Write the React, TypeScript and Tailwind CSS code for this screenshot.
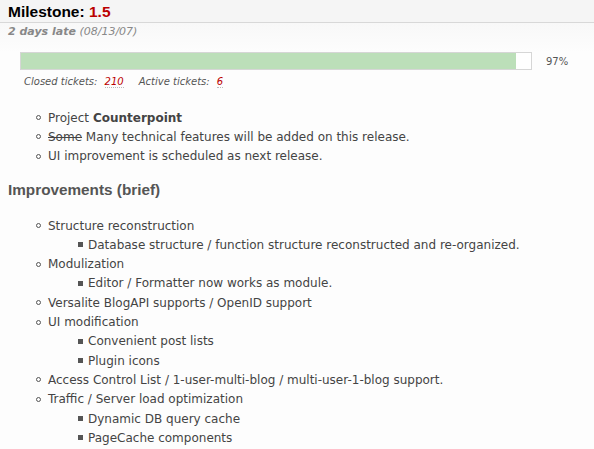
import React from "react";

interface Item {
  text: React.ReactNode;
  children?: string[];
}

const intro: Item[] = [
  {
    text: (
      <>
        Project <b>Counterpoint</b>
      </>
    ),
  },
  {
    text: (
      <>
        <del>Some</del> Many technical features will be added on this release.
      </>
    ),
  },
  { text: "UI improvement is scheduled as next release." },
];

const improvements: Item[] = [
  {
    text: "Structure reconstruction",
    children: [
      "Database structure / function structure reconstructed and re-organized.",
    ],
  },
  { text: "Modulization", children: ["Editor / Formatter now works as module."] },
  { text: "Versalite BlogAPI supports / OpenID support" },
  { text: "UI modification", children: ["Convenient post lists", "Plugin icons"] },
  { text: "Access Control List / 1-user-multi-blog / multi-user-1-blog support." },
  {
    text: "Traffic / Server load optimization",
    children: ["Dynamic DB query cache", "PageCache components"],
  },
];

const Bullet = ({ square = false }: { square?: boolean }) =>
  square ? (
    <span className="w-[5px] h-[5px] bg-[#555] shrink-0 mr-[5px]" />
  ) : (
    <span className="w-[5px] h-[5px] rounded-full border border-[#555] shrink-0 mr-[7px]" />
  );

const List = ({ items }: { items: Item[] }) => (
  <ul className="pl-[36px]">
    {items.map((item, i) => (
      <li key={i}>
        <div className="flex items-center h-[19.3px]">
          <Bullet />
          <span>{item.text}</span>
        </div>
        {item.children && (
          <ul className="pl-[42px]">
            {item.children.map((c, j) => (
              <li key={j} className="flex items-center h-[19.3px]">
                <Bullet square />
                <span>{c}</span>
              </li>
            ))}
          </ul>
        )}
      </li>
    ))}
  </ul>
);

export default function App() {
  return (
    <div className="w-[594px] h-[449px] overflow-hidden bg-[#fdfdfd] text-[#444] font-['DejaVu_Sans',sans-serif] text-[12px]">
      <div className="h-[23px] bg-[#f5f5f5] border-b border-[#d8d8d8] px-2 flex items-center pt-[2px]">
        <h1 className="font-['Liberation_Sans',sans-serif] font-bold text-[15.5px] text-black leading-none">
          Milestone: <span className="text-[#b00]">1.5</span>
        </h1>
      </div>
      <div className="bg-gradient-to-b from-[#f8f8f8] to-[#fdfdfd]">
        <p className="px-2 h-[29px] pt-[1px] leading-[15px] italic text-[#888] text-[11px]">
          <span className="font-bold">2 days late</span> (08/13/07)
        </p>
      </div>
      <div className="flex items-center pl-[20px]">
        <div className="w-[512px] h-[18px] border border-[#d6d6d6] bg-white">
          <div className="h-full w-[97%] bg-[#bcdfb9]" />
        </div>
        <span className="ml-[14px] text-[10px] text-[#555]">97%</span>
      </div>
      <div className="pl-[24px] pt-[2px] italic text-[10px] text-[#555] flex gap-[15px] h-[20px] items-center">
        <span>
          Closed tickets:{" "}
          <span className="ml-[4px] text-[#b00] border-b border-dotted border-[#bbb]">210</span>
        </span>
        <span>
          Active tickets:{" "}
          <span className="ml-[4px] text-[#b00] border-b border-dotted border-[#bbb]">6</span>
        </span>
      </div>
      <div className="pt-[18px]">
        <List items={intro} />
      </div>
      <h2 className="px-2 pt-[14px] pb-[16px] font-['Liberation_Sans',sans-serif] font-bold text-[15.3px] text-[#555] leading-[20px]">
        Improvements (brief)
      </h2>
      <List items={improvements} />
    </div>
  );
}
